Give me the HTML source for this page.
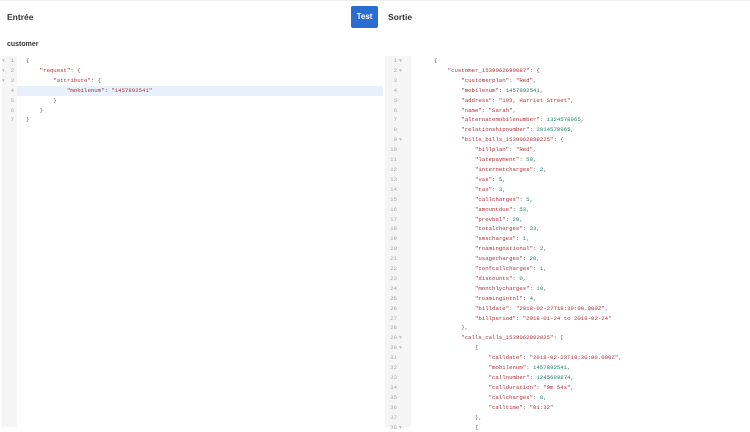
<!DOCTYPE html>
<html><head><meta charset="utf-8"><style>
body{margin:0;width:750px;height:427px;background:#fff;position:relative;overflow:hidden;font-family:"Liberation Sans",sans-serif}
.t{position:absolute;font-size:8.5px;color:#333;font-weight:bold}
.btn{position:absolute;left:351px;top:6px;width:27px;height:22px;background:#2b6cd1;border-radius:2px;color:#fff;font-size:8px;font-weight:bold;text-align:center;line-height:22px}
.g{position:absolute;background:#f5f5f5}
pre{margin:0;position:absolute;font-family:"Liberation Mono",monospace;font-size:5.7px;line-height:9.9px;color:#666}
.k{color:#b3343a}.n{color:#1f8a68}
.ln{color:#aaa;text-align:right}
</style></head><body>
<div style="position:absolute;left:0;top:0;width:750px;height:1px;background:#eee"></div>
<div class="t" style="left:7px;top:12px">Entrée</div>
<div class="btn">Test</div>
<div class="t" style="left:388px;top:12px">Sortie</div>
<div class="t" style="left:7px;top:41px;font-size:7px">customer</div>
<div class="g" style="left:2px;top:56px;width:15px;height:371px"></div>
<div style="position:absolute;left:17px;top:86px;width:366px;height:10px;background:#e8f0fb"></div>
<div class="g" style="left:385px;top:56px;width:26px;height:371px"></div>
<pre class="ln" style="left:2px;top:56px;width:12px">1
2
3
4
5
6
7</pre>
<pre style="left:2px;top:56px;color:#bbb">▾
▾
▾</pre>
<pre style="left:26px;top:56px">{
    <span class="k">"request"</span>: {
        <span class="k">"attribute"</span>: {
            <span class="k">"mobilenum"</span>: <span class="k">"1457892541"</span>
        }
    }
}</pre>
<pre class="ln" style="left:385px;top:56px;width:12px">1
2
3
4
5
6
7
8
9
10
11
12
13
14
15
16
17
18
19
20
21
22
23
24
25
26
27
28
29
30
31
32
33
34
35
36
37
38</pre>
<pre style="left:399px;top:56px;color:#bbb">▾
▾






▾



















▾
▾







▾</pre>
<pre style="left:434px;top:56px">{
    <span class="k">"customer_1539062690087"</span>: {
        <span class="k">"customerplan"</span>: <span class="k">"Red"</span>,
        <span class="k">"mobilenum"</span>: <span class="n">1457892541</span>,
        <span class="k">"address"</span>: <span class="k">"103, Harriet Street"</span>,
        <span class="k">"name"</span>: <span class="k">"Sarah"</span>,
        <span class="k">"alternatemobilenumber"</span>: <span class="n">1324578965</span>,
        <span class="k">"relationshipnumber"</span>: <span class="n">2014578965</span>,
        <span class="k">"bills_bills_1539062839225"</span>: {
            <span class="k">"billplan"</span>: <span class="k">"Red"</span>,
            <span class="k">"latepayment"</span>: <span class="n">50</span>,
            <span class="k">"internetcharges"</span>: <span class="n">2</span>,
            <span class="k">"vas"</span>: <span class="n">5</span>,
            <span class="k">"tax"</span>: <span class="n">3</span>,
            <span class="k">"callcharges"</span>: <span class="n">5</span>,
            <span class="k">"amountdue"</span>: <span class="n">53</span>,
            <span class="k">"prevbal"</span>: <span class="n">20</span>,
            <span class="k">"totalcharges"</span>: <span class="n">33</span>,
            <span class="k">"smscharges"</span>: <span class="n">1</span>,
            <span class="k">"roamingnational"</span>: <span class="n">2</span>,
            <span class="k">"usagecharges"</span>: <span class="n">20</span>,
            <span class="k">"confcallcharges"</span>: <span class="n">1</span>,
            <span class="k">"discounts"</span>: <span class="n">0</span>,
            <span class="k">"monthlycharges"</span>: <span class="n">10</span>,
            <span class="k">"roamingintnl"</span>: <span class="n">4</span>,
            <span class="k">"billdate"</span>: <span class="k">"2018-02-27T18:30:00.000Z"</span>,
            <span class="k">"billperiod"</span>: <span class="k">"2018-01-24 to 2018-02-24"</span>
        },
        <span class="k">"calls_calls_1539062802025"</span>: [
            {
                <span class="k">"calldate"</span>: <span class="k">"2018-02-23T18:30:00.000Z"</span>,
                <span class="k">"mobilenum"</span>: <span class="n">1457892541</span>,
                <span class="k">"callnumber"</span>: <span class="n">1245689874</span>,
                <span class="k">"callduration"</span>: <span class="k">"0m 54s"</span>,
                <span class="k">"callcharges"</span>: <span class="n">8</span>,
                <span class="k">"calltime"</span>: <span class="k">"01:32"</span>
            },
            {</pre>
</body></html>
